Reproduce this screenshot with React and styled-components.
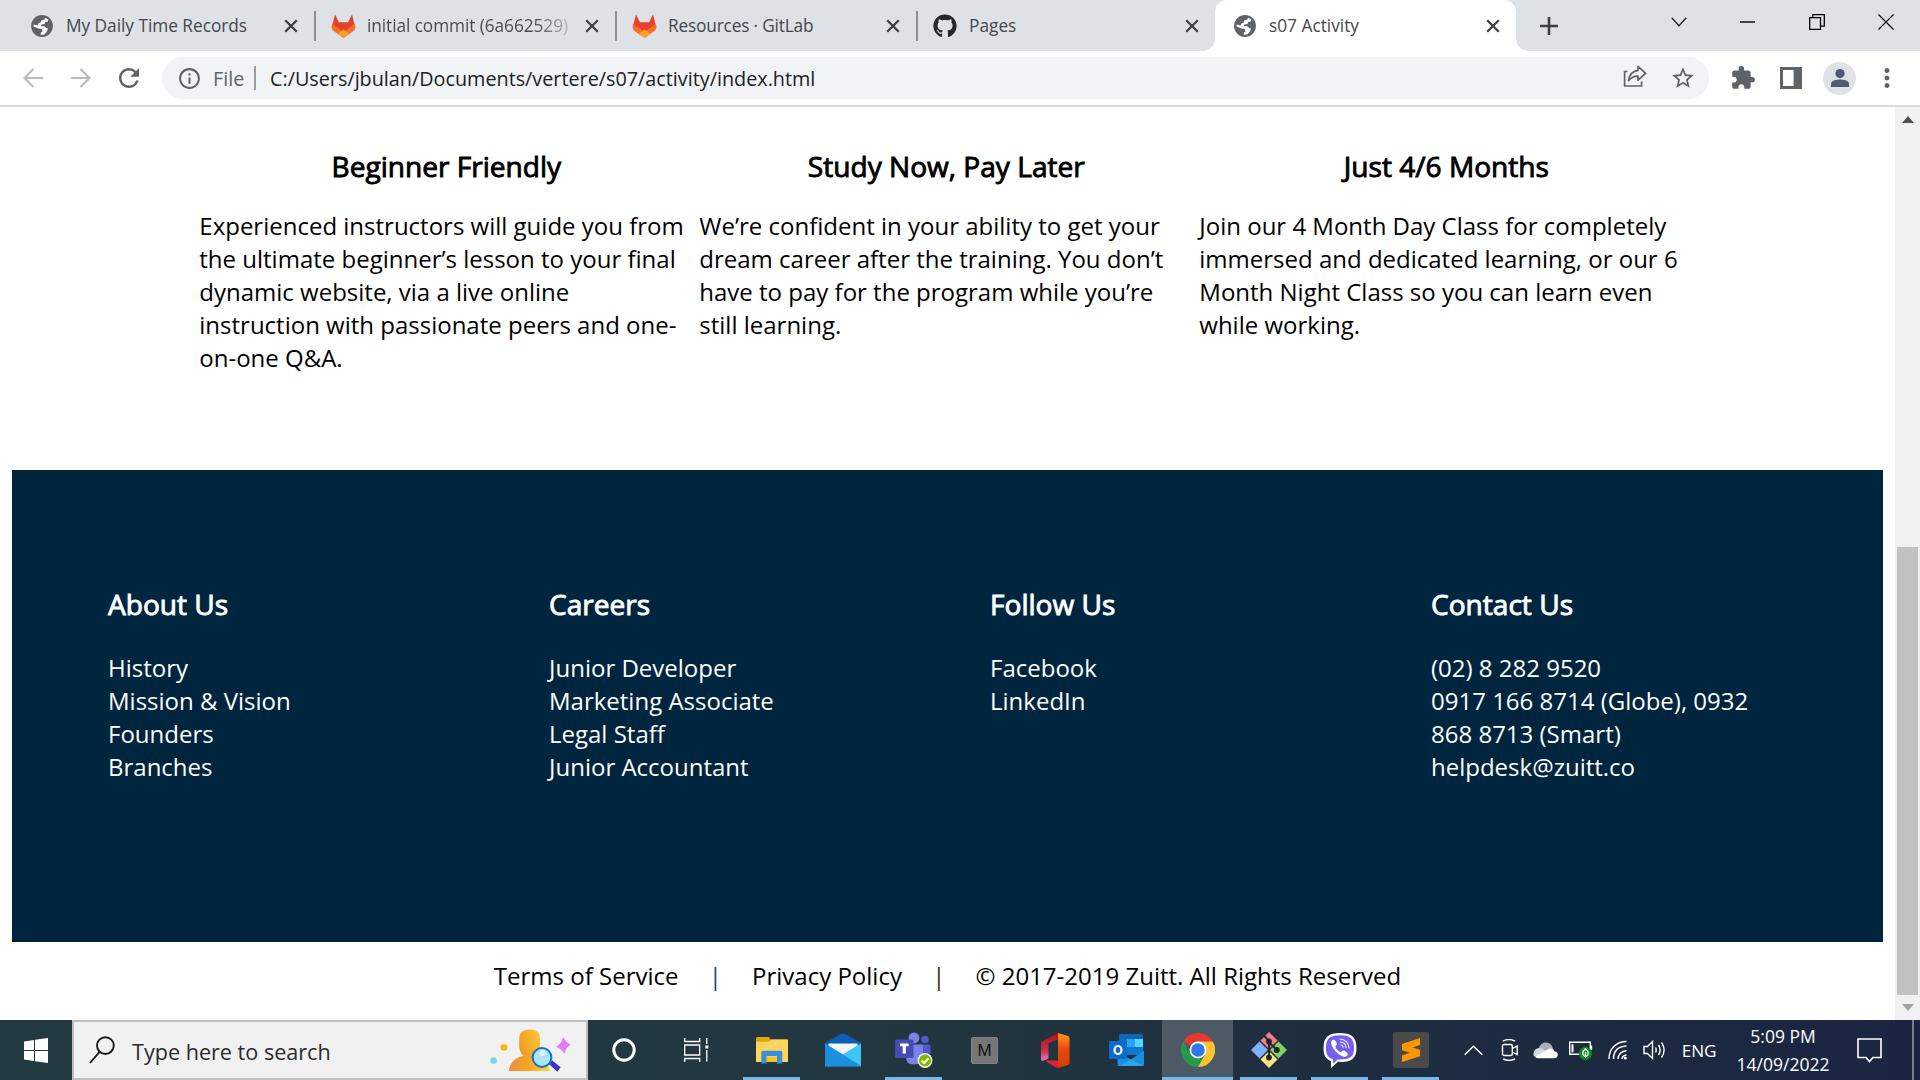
import React from "react";
import styled, { createGlobalStyle, css } from "styled-components";
import { MdRefresh, MdInfoOutline, MdStarBorder, MdExtension, MdMoreVert } from "react-icons/md";
import { FaGithub } from "react-icons/fa";

const GlobalStyle = createGlobalStyle`
  * { box-sizing: border-box; }
  html, body { margin: 0; padding: 0; overflow: hidden; background: #fff; }
  body { font-family: "Open Sans", "Noto Sans", sans-serif; }
  svg { display: block; flex: none; }
`;

const Desktop = styled.div`
  width: 1920px;
  height: 1080px;
  display: flex;
  flex-direction: column;
  overflow: hidden;
`;

/* ---------- browser tabs ---------- */

const TabStrip = styled.header`
  height: 51px;
  flex: none;
  display: flex;
  background: #dee1e6;
  padding-left: 13px;
`;

const Tab = styled.div`
  width: ${(p) => (p.$last ? 299 : 301)}px;
  height: 51px;
  display: flex;
  align-items: center;
  padding: 0 16px 0 ${(p) => (p.$active ? 17 : 16)}px;
  position: relative;
  ${(p) =>
    p.$active &&
    css`
      background: #fff;
      border-radius: 12px 12px 0 0;
      &::before,
      &::after {
        content: "";
        position: absolute;
        bottom: 0;
        width: 12px;
        height: 12px;
      }
      &::before {
        left: -12px;
        background: radial-gradient(circle at 0 0, transparent 11.5px, #fff 12px);
      }
      &::after {
        right: -12px;
        background: radial-gradient(circle at 100% 0, transparent 11.5px, #fff 12px);
      }
    `}
  ${(p) =>
    p.$divider &&
    css`
      &::after {
        content: "";
        position: absolute;
        right: -2px;
        top: 11px;
        width: 2px;
        height: 30px;
        background: #8d9094;
      }
    `}
`;

const Favicon = styled.span`
  width: 26px;
  display: flex;
  justify-content: center;
  flex: none;
  margin-right: 11px;
  color: ${(p) => p.$color || "#5f6368"};
`;

const TabTitle = styled.span`
  width: 203px;
  flex: none;
  font-size: 17.3px;
  line-height: 24px;
  letter-spacing: ${(p) => p.$tracking || 0}px;
  color: #45484c;
  white-space: nowrap;
  ${(p) =>
    p.$fade &&
    css`
      background: linear-gradient(90deg, #45484c 168px, #b9bcc0 203px);
      -webkit-background-clip: text;
      color: transparent;
    `}
`;

const CloseSlot = styled.span`
  margin-left: auto;
`;

const NewTab = styled.div`
  width: 66px;
  display: flex;
  align-items: center;
  justify-content: center;
`;

const WindowControls = styled.div`
  margin-left: auto;
  display: flex;
  height: 43px;
  align-items: center;
`;

const WindowButton = styled.span`
  width: 69px;
  display: flex;
  justify-content: center;
`;

/* ---------- toolbar ---------- */

const Toolbar = styled.div`
  height: 56px;
  flex: none;
  display: flex;
  align-items: center;
  background: #fff;
  border-bottom: 2px solid #d9dadc;
  padding: 0 16px 0 9px;
`;

const ToolButton = styled.span`
  width: ${(p) => p.$w || 48}px;
  flex: none;
  display: flex;
  justify-content: center;
  color: #5f6368;
`;

const Omnibox = styled.div`
  flex: none;
  width: 1547px;
  height: 42px;
  margin-left: 9px;
  margin-right: 10px;
  border-radius: 21px;
  background: #f1f3f4;
  display: flex;
  align-items: center;
  padding-left: 15px;
  padding-right: 2px;
  color: #5f6368;
  font-size: 19.8px;
`;

const Scheme = styled.span`
  margin-left: 11px;
  width: 41px;
`;

const Rule = styled.span`
  width: 2px;
  height: 24px;
  background: #9a9da1;
  margin-right: 14px;
`;

const Url = styled.span`
  color: #202124;
`;

const OmniActions = styled.span`
  margin-left: auto;
  display: flex;
`;

const Avatar = styled.span`
  width: 33px;
  height: 33px;
  border-radius: 50%;
  background: #dee1e6;
  display: flex;
  align-items: center;
  justify-content: center;
`;

/* ---------- page ---------- */

const Viewport = styled.div`
  height: 913px;
  flex: none;
  display: flex;
  background: #fff;
`;

const Page = styled.main`
  width: 1895px;
  height: 913px;
  padding: 40px 12px 0;
  display: flex;
  flex-direction: column;
  font-size: 24px;
  line-height: 33px;
  color: #000;
`;

const Features = styled.section`
  height: 323px;
  flex: none;
  display: grid;
  grid-template-columns: repeat(3, 494px);
  column-gap: 6px;
  padding-left: 187.3px;
`;

const Heading = styled.h3`
  margin: 0 0 ${(p) => p.$gap}px;
  font-size: 28.08px;
  line-height: 38px;
  font-weight: 400;
  -webkit-text-stroke: 0.9px currentColor;
  text-align: ${(p) => (p.$center ? "center" : "left")};
`;

const Copy = styled.p`
  margin: 0;
`;

const Footer = styled.footer`
  width: 1871px;
  height: 472px;
  flex: none;
  background: #00253f;
  color: #fff;
  display: grid;
  grid-template-columns: repeat(4, 345px);
  column-gap: 96px;
  padding: 115px 0 0 96px;
`;

const Links = styled.ul`
  list-style: none;
  margin: 0;
  padding: 0;
`;

const Legal = styled.div`
  display: flex;
  justify-content: center;
  margin-top: 17px;
  white-space: pre;
`;

const LegalItem = styled.span`
  padding: 0 ${(p) => (p.$bar ? 30.2 : 0)}px;
  color: ${(p) => p.$tint || "#000"};
`;

const Scrollbar = styled.div`
  width: 25px;
  background: #f1f1f1;
  display: flex;
  flex-direction: column;
  align-items: center;
`;

const ScrollArrow = styled.div`
  height: 25px;
  width: 25px;
  display: flex;
  align-items: center;
  justify-content: center;
`;

const Thumb = styled.div`
  width: 21px;
  height: 449px;
  margin-top: 415px;
  background: #c1c1c1;
`;

/* ---------- taskbar ---------- */

const Taskbar = styled.div`
  height: 60px;
  flex: none;
  display: flex;
  color: #fff;
  background: linear-gradient(90deg, #22393f 0%, #22373f 45%, #20303f 62%, #1c2b40 80%, #1a2542 100%);
`;

const Start = styled.div`
  width: 72px;
  flex: none;
  display: flex;
  align-items: center;
  justify-content: center;
`;

const Search = styled.div`
  width: 516px;
  flex: none;
  height: 60px;
  border: 2px solid #c0c0c0;
  background: #f1f1f1;
  color: #2b2b2b;
  display: flex;
  align-items: center;
  padding: 0 16px 0 15px;
  font-size: 21.6px;
`;

const SearchText = styled.span`
  margin-left: 17px;
  padding-top: 2px;
  flex: 1;
`;

const Apps = styled.div`
  display: flex;
  flex: none;
`;

const AppButton = styled.div`
  width: ${(p) => p.$w || 71}px;
  flex: none;
  height: 60px;
  display: flex;
  align-items: center;
  justify-content: center;
  position: relative;
  margin-right: ${(p) => p.$gap || 0}px;
  background: ${(p) => (p.$active ? "#4d5964" : "transparent")};
  ${(p) =>
    p.$open &&
    css`
      &::after {
        content: "";
        position: absolute;
        bottom: 0;
        left: ${p.$active ? 0 : 7}px;
        right: ${p.$active ? 0 : 7}px;
        height: 3px;
        background: #76b9ed;
      }
    `}
`;

const MTile = styled.span`
  width: 27px;
  height: 27px;
  border-radius: 2px;
  background: #767676;
  border: 1px solid #838383;
  color: #111;
  font: 17px/25px "Liberation Sans", Arial, sans-serif;
  text-align: center;
`;

const Tray = styled.div`
  margin-left: auto;
  flex: none;
  display: flex;
  align-items: center;
  padding-right: 6px;
`;

const TrayItem = styled.span`
  width: ${(p) => p.$w}px;
  flex: none;
  display: flex;
  justify-content: center;
  align-items: center;
`;

const Lang = styled.span`
  width: 56px;
  text-align: center;
  font-size: 17.2px;
  letter-spacing: -0.2px;
`;

const Clock = styled.span`
  width: 112px;
  text-align: center;
  font-size: 17.5px;
  line-height: 28px;
`;

const ShowDesktop = styled.span`
  width: 2px;
  height: 60px;
  margin-left: 13px;
  background: #76808d;
`;

/* ---------- drawings ---------- */

const Globe = () => (
  <svg width="22" height="22" viewBox="0 0 22 22">
    <circle cx="11" cy="11" r="10.900" fill="#5f6368" />
    <path
      d="M14.200 2.700 17.400 4.600 16.800 6.600 14 7.200 13.600 9 10.400 9.400 9.800 11.200H13.200L15.200 13 17 13.400 16 16.600 13.200 19.600 9.400 19.800 10 17.600 11.600 16.400 10.600 14 6.600 13.200 2.300 11.200 2.800 9.400 6.400 10.400 7.600 8.200 9.800 7.400 10.200 5.400 13.200 4.800Z"
      fill="#fff"
    />
  </svg>
);

const Cross = () => (
  <svg width="14" height="14" viewBox="0 0 14 14">
    <path d="M1.2 1.2 12.8 12.8M12.8 1.2 1.2 12.8" stroke="#3c4043" strokeWidth="2.3" />
  </svg>
);

const GitLab = () => (
  <svg width="26" height="26" viewBox="0 0 26 26">
    <path d="M2 13.500 5 1.200 9 9.600h9l4-8.400L25 13.500 13.500 25Z" fill="#e2432a" />
    <path d="M2 10.500 1.500 14.500Q2 17 4 18.200L13.500 25 23 18.200Q25 17 25.500 14.500L25 10.500 13.500 19Z" fill="#fc6d26" />
    <path d="M4 9.600h19L13.500 18.200Z" fill="#e2432a" />
    <path d="M8 20.800 13.500 16.600l5.500 4.200L13.500 25Z" fill="#fca326" />
  </svg>
);

const Arrow = ({ flip }) => (
  <svg width="20" height="20" viewBox="0 0 20 20" fill="none" stroke="#bababc" strokeWidth="2.2">
    <path d={flip ? "M0 10H18M9.6 1 18.5 10 9.6 19" : "M20 10H2M10.4 1 1.5 10 10.4 19"} />
  </svg>
);

const Share = () => (
  <svg width="24" height="22" viewBox="0 0 24 22" fill="none" stroke="#5f6368" strokeWidth="1.7">
    <path d="M4.500 6.500H1.600V21H18.600V16.500" />
    <path d="M15 1.400 22.700 8.400 15 15.200V11.200C10.500 11.200 8 12.600 5.600 15.600 6.200 10 9.500 6.200 15 5.400Z" strokeLinejoin="round" />
  </svg>
);

const SidePanel = () => (
  <svg width="22" height="22" viewBox="0 0 22 22">
    <path d="M0 0H22V22H0ZM3 3V19H13.6V3Z" fill="#5f6368" fillRule="evenodd" />
  </svg>
);

const Person = () => (
  <svg width="20" height="20" viewBox="0 0 20 20" fill="#4e5a6e">
    <circle cx="10" cy="5.6" r="4.6" />
    <path d="M1 19v-3.2C1 12.700 6 11.600 10 11.600s9 1.100 9 4.200V19Z" />
  </svg>
);

const Windows = () => (
  <svg width="24" height="25" viewBox="0 0 24 25" fill="#fff">
    <path d="M0 3.400 10 2v10H0ZM11 1.850 24 0v12H11ZM0 13h10v10L0 21.600ZM11 13h13v12l-13-1.850Z" />
  </svg>
);

const Magnifier = () => (
  <svg width="26" height="28" viewBox="0 0 26 28" fill="none" stroke="#1a1a1a" strokeWidth="1.9">
    <circle cx="16.400" cy="9.600" r="8.400" />
    <path d="M10.600 15.800 1 27" />
  </svg>
);

const SearchArt = () => (
  <svg width="84" height="52" viewBox="0 0 84 52">
    <defs>
      <linearGradient id="body" x1="0" x2="1" y1="0" y2="0">
        <stop offset="0" stopColor="#e98c44" />
        <stop offset="0.450" stopColor="#f5a623" />
        <stop offset="1" stopColor="#ffd43b" />
      </linearGradient>
      <linearGradient id="neck" x1="0" x2="1" y1="0.600" y2="0">
        <stop offset="0" stopColor="#f09a1f" />
        <stop offset="1" stopColor="#ffc83a" />
      </linearGradient>
    </defs>
    <circle cx="18" cy="23.500" r="3.300" fill="#ffb300" />
    <circle cx="7.500" cy="36.500" r="3.300" fill="#6fd9ea" />
    <path d="M23 47c1-9 7-15.500 19-15.500S63 38 64 47Z" fill="url(#body)" />
    <path d="M33.200 15c0-6.500 4-9.600 10.500-9.600S54 8.500 54 15v6c0 7-3 12.600-10.400 12.600S33.200 28 33.200 21Z" fill="url(#neck)" />
    <path d="m63 40 3-3.800 8.700 7-3.500 4.600Z" fill="#3d35c9" />
    <circle cx="56" cy="33.500" r="9.400" fill="#ace4f7" stroke="#1170cf" strokeWidth="2" />
    <circle cx="56.500" cy="29" r="3" fill="#e3f8ff" />
    <path d="M77.300 14.500q1.600 4 6.700 6.600-4.600 1-5.700 7.200-2.600-4.600-7-5.600 4.700-2.200 6-8.200Z" fill="#e57bf5" stroke="#e57bf5" strokeWidth="1.500" strokeLinejoin="round" />
  </svg>
);

const TaskView = () => (
  <svg width="25" height="24" viewBox="0 0 25 24" fill="none" stroke="#fff" strokeWidth="1.300">
    <path d="M.7 0V3.500H15.700V0M.7 24V20.500H15.700V24M.7 7H15.700V17H.7ZM22.800 0V6M22.800 12V23.500" />
    <path d="M21.300 7.500h3v3h-3Z" fill="#fff" stroke="none" />
  </svg>
);

const Explorer = () => (
  <svg width="32" height="27" viewBox="0 0 32 27">
    <path d="M0 1.500Q0 0 1.500 0H13l1.500 2.500H30.500Q32 2.500 32 4V24.500H0Z" fill="#e3a20b" />
    <path d="M0 4.700H13L15.500 2.500H32V25H0Z" fill="#ffd45e" />
    <path d="M5.300 26.600V15.500Q5.300 13.800 7 13.800H24.600Q26.300 13.800 26.300 15.500V26.600H21V19H10.600V26.600Z" fill="#3a8fd9" />
    <path d="M10.800 20H20.800V25H10.800Z" fill="#fbc02d" />
  </svg>
);

const Mail = () => (
  <svg width="36" height="34" viewBox="0 0 36 34">
    <path d="M0 10 16.200.8Q18 0 19.800.8L36 10V20H0Z" fill="#0a5fb4" />
    <path d="M3.500 10.500H32.500V22H3.500Z" fill="#f3f5f8" />
    <path d="M0 10.500 18 21.500 36 10.500V33.500H0Z" fill="#28a9ea" />
    <path d="M18 21.500 36 10.500V33.500Z" fill="#3cc7f4" />
    <path d="M0 10.500 36 33H1.200Q0 33 0 32Z" fill="#1d8fe0" />
  </svg>
);

const Teams = () => (
  <svg width="38" height="36" viewBox="0 0 38 36">
    <circle cx="30" cy="7.500" r="3.800" fill="#5059c9" />
    <path d="M24 12.500H34Q35.500 12.500 35.500 14V21q0 6-7 6Z" fill="#5059c9" />
    <circle cx="19" cy="6" r="5.400" fill="#7b83eb" />
    <path d="M11 12.500H26.500Q28 12.500 28 14V23q0 9-8.500 9.500T11 25Z" fill="#7b83eb" />
    <rect x="0" y="7.500" width="18.500" height="18.500" rx="1.500" fill="#454db5" />
    <path d="M5 11.500H13.600V14.200H10.900V21.500H7.700V14.200H5Z" fill="#fff" />
    <circle cx="30" cy="28.500" r="7.400" fill="#fff" />
    <circle cx="30" cy="28.500" r="6.100" fill="#7fba00" />
    <path d="m26.600 28.600 2.500 2.500 4.400-4.700" stroke="#fff" strokeWidth="2.100" fill="none" />
  </svg>
);

const Office = () => (
  <svg width="29" height="35" viewBox="0 0 29 35">
    <defs>
      <linearGradient id="offl" x1="0" x2="0" y1="0" y2="1">
        <stop offset="0" stopColor="#b01116" />
        <stop offset="0.650" stopColor="#c8354e" />
        <stop offset="1" stopColor="#e879c8" />
      </linearGradient>
      <linearGradient id="offr" x1="0" x2="0" y1="0" y2="1">
        <stop offset="0" stopColor="#ff9a1a" />
        <stop offset="0.450" stopColor="#e84a0c" />
        <stop offset="1" stopColor="#d83b01" />
      </linearGradient>
    </defs>
    <path d="M0 9 17 0V6.500L7.500 10V25.500L1.500 28Q0 28 0 26Z" fill="url(#offl)" />
    <path d="M5.500 27.500H17V35L15 34.500 5.500 29Z" fill="#e0203a" />
    <path d="M17 0 27 3Q28.500 3.600 28.500 5V30Q28.500 31.600 27 32L17 35Z" fill="url(#offr)" />
  </svg>
);

const Outlook = () => (
  <svg width="36" height="33" viewBox="0 0 36 33">
    <path d="M10 1.500Q10 0 11.500 0H32.500Q34 0 34 1.500V21H10Z" fill="#1066b5" />
    <path d="M10 5H18V13H10Z" fill="#1470c4" />
    <path d="M18 5H26V13H18Z" fill="#28a8ea" />
    <path d="M26 5H34V13H26Z" fill="#50d9ff" />
    <path d="M18 13H34V21H18Z" fill="#0f78d4" />
    <path d="M35 16.500V30.500Q35 32 33.500 32H10Q8.500 32 8.500 30.500V18L22 25.500Z" fill="#1a8fe0" />
    <path d="M22 25.500 35 32H10Z" fill="#2ba6ee" />
    <rect x="0" y="7" width="18" height="18" rx="1.400" fill="#0c6cc8" />
    <ellipse cx="9" cy="16" rx="3.500" ry="4" stroke="#fff" strokeWidth="2.200" fill="none" />
  </svg>
);

const Chrome = () => (
  <svg width="34" height="34" viewBox="0 0 48 48">
    <path d="M24 24 3.200 12A24 24 0 0 1 44.800 12Z" fill="#e33b2e" />
    <path d="M24 24V12H44.800A24 24 0 0 1 24 48Z" fill="#fdc52c" />
    <path d="M3.200 12A24 24 0 0 0 24 48L34.400 30 24 24 13.600 30Z" fill="#259a4b" />
    <circle cx="24" cy="24" r="12" fill="#fff" />
    <circle cx="24" cy="24" r="9.600" fill="#2f78ec" />
  </svg>
);

const Git = () => (
  <svg width="36" height="36" viewBox="0 0 36 36">
    <path d="M18 0 26.500 8.500 18 17 9.500 8.500Z" fill="#f77d7f" />
    <path d="M8.500 9.500 17 18 8.500 26.500 0 18Z" fill="#7fb0fb" />
    <path d="M27.500 9.500 36 18 27.500 26.500 19 18Z" fill="#84cf60" />
    <path d="M18 19 26.500 27.500 18 36 9.500 27.500Z" fill="#ffe27a" />
    <path d="M13 3.500 18 9V26M18 10.500 26 18" stroke="#1c2a38" strokeWidth="2" fill="none" />
    <circle cx="18" cy="9.500" r="2.900" fill="#1a2530" />
    <circle cx="18" cy="25.500" r="2.900" fill="#1a2530" />
    <circle cx="25.800" cy="18" r="2.900" fill="#1a2530" />
  </svg>
);

const Viber = () => (
  <svg width="36" height="37" viewBox="0 0 36 37">
    <path d="M18 1C7 1 1.500 4.500 1.500 16c0 7 2 11 7.500 13V36l7-6.200c13 .7 18.500-2.800 18.500-13.800C34.500 4.500 29 1 18 1Z" fill="#fff" />
    <path d="M18 3.300C8.500 3.300 4 6 4 16c0 6 1.700 9.800 7 11.200v4.600l4.500-4.400C27.500 28 32 25.500 32 16 32 6 27.500 3.300 18 3.300Z" fill="#7360f2" />
    <path d="M11.500 7.500c-1.800.8-3 2.200-2.300 4.200 2 6 6.500 10.800 12.300 13 2 .7 3.600-.7 4.300-2.500.3-1-2.500-3-3.900-3.600-1.500-.5-2 1.600-3.200 1.500-2.600-.8-4.600-2.900-5.400-5.500.1-1.300 2-1.400 1.600-3-.5-1.400-2.200-4-3.400-4.100Z" fill="#fff" />
    <path d="M17.500 7c5.500 0 9.500 4 9.500 9.500M18 10c3.700.2 6 2.500 6 6M18.500 13c1.600.1 2.500 1 2.600 2.500" stroke="#e9e5ff" strokeWidth="1.200" fill="none" />
  </svg>
);

const Sublime = () => (
  <svg width="36" height="36" viewBox="0 0 36 36">
    <rect width="36" height="36" rx="2" fill="#4a4a4a" />
    <path d="M9 12 27 6V13L19.500 15.500 27 17.700V24.300L9 30V23.500L17 20.800 9 18.300Z" fill="#ff9800" />
  </svg>
);

const line = { fill: "none", stroke: "#fff", strokeWidth: 1.4 };

const Chevron = () => (
  <svg width="19" height="11" viewBox="0 0 19 11" {...line}>
    <path d="m.7 9.800 8.800-8.600 8.800 8.600" />
  </svg>
);

const MeetNow = () => (
  <svg width="18" height="24" viewBox="0 0 18 24" {...line}>
    <rect x="1.500" y="6.500" width="9.800" height="11" rx="1.500" />
    <path d="m11.500 10.500 4.700-2.500v8.500l-4.700-2.500M2 3Q8 .2 14 3M2 21Q8 23.800 14 21" />
  </svg>
);

const Cloud = () => (
  <svg width="25" height="17" viewBox="0 0 25 17">
    <path d="M5.500 8C6 3 9 .5 13 .5c3.500 0 6 2 7 6l-8 5Z" fill="#a9afb8" />
    <path d="M1 14.500C-.7 10.500 2 6 6.500 6c2.500 0 4.500 1.500 8 4l-6 4Z" fill="#d5d8dc" />
    <path d="M2 15c3-3 8-4 12-7 3-2.500 7-1.500 7.500 1.600 2.500 0 3.500 2 3.300 3.400-.2 2-1.600 3.300-3.800 3.300H5.500Q3.200 16.300 2 15Z" fill="#fff" />
  </svg>
);

const Battery = () => (
  <svg width="24" height="20" viewBox="0 0 24 20">
    <path d="M.7 2.200H21.300V14.300H.7ZM22.500 5.500V10" {...line} />
    <rect x="2.500" y="4.300" width="2" height="8" fill="#fff" />
    <circle cx="16.500" cy="13.300" r="6.600" fill="#0b8a1a" />
    <path d="M16.500 8.800c-3.500 3-3.500 5.500-1 7.500h2c2.500-2 2.500-4.500-1-7.500ZM16.500 12.100v6" fill="none" stroke="#fff" strokeWidth="1.300" />
  </svg>
);

const Wifi = () => (
  <svg width="20" height="20" viewBox="0 0 20 20" {...line}>
    <path d="M1 19C1 9 8 1.500 18.500 1.500M5.500 19C5.500 11 10.500 6.500 18.500 6M10 19c0-4.500 3.500-8 8.500-8.300" />
    <path d="M14 19c.2-2 2-3.700 4.500-4" />
    <circle cx="17.300" cy="18" r="1.500" fill="#fff" stroke="none" />
  </svg>
);

const Speaker = () => (
  <svg width="23" height="20" viewBox="0 0 23 20" {...line}>
    <path d="M1 6.500H4.500L9.500 1.500V18.500L4.500 13.500H1Z" />
    <path d="M12.500 7.500q1.500 2.500 0 5M15.500 5q3.300 5 0 10M18.500 2.500q5.200 7.500 0 15" />
  </svg>
);

const Notice = () => (
  <svg width="25" height="26" viewBox="0 0 25 26" {...line} strokeWidth="1.600">
    <path d="M1 2H24V20.500H16L12.500 24.500 9 20.500H1Z" />
  </svg>
);

/* ---------- data ---------- */

const tabs = [
  { title: "My Daily Time Records", icon: <Globe />, divider: true, tracking: -0.03 },
  { title: "initial commit (6a662529)", icon: <GitLab />, divider: true, fade: true, tracking: -0.08 },
  { title: "Resources · GitLab", icon: <GitLab />, divider: true, tracking: -0.18 },
  { title: "Pages", icon: <FaGithub size={24} />, color: "#24292f", last: true },
  { title: "s07 Activity", icon: <Globe />, active: true },
];

const features = [
  ["Beginner Friendly", "Experienced instructors will guide you from the ultimate beginner’s lesson to your final dynamic website, via a live online instruction with passionate peers and one-on-one Q&A."],
  ["Study Now, Pay Later", "We’re confident in your ability to get your dream career after the training. You don’t have to pay for the program while you’re still learning."],
  ["Just 4/6 Months", "Join our 4 Month Day Class for completely immersed and dedicated learning, or our 6 Month Night Class so you can learn even while working."],
];

const footer = [
  ["About Us", ["History", "Mission & Vision", "Founders", "Branches"]],
  ["Careers", ["Junior Developer", "Marketing Associate", "Legal Staff", "Junior Accountant"]],
  ["Follow Us", ["Facebook", "LinkedIn"]],
  ["Contact Us", ["(02) 8 282 9520", "0917 166 8714 (Globe), 0932 868 8713 (Smart)", "helpdesk@zuitt.co"]],
];

const apps = [
  { icon: <Explorer />, open: true },
  { icon: <Mail /> },
  { icon: <Teams />, open: true },
  { icon: <MTile>M</MTile> },
  { icon: <Office /> },
  { icon: <Outlook /> },
  { icon: <Chrome />, open: true, active: true },
  { icon: <Git />, open: true },
  { icon: <Viber />, open: true },
  { icon: <Sublime />, open: true },
];

export default function App() {
  return (
    <Desktop>
      <GlobalStyle />
      <TabStrip>
        {tabs.map((t) => (
          <Tab key={t.title} $active={t.active} $divider={t.divider} $last={t.last}>
            <Favicon $color={t.color}>{t.icon}</Favicon>
            <TabTitle $fade={t.fade} $tracking={t.tracking}>{t.title}</TabTitle>
            <CloseSlot><Cross /></CloseSlot>
          </Tab>
        ))}
        <NewTab>
          <svg width="18" height="18" viewBox="0 0 18 18">
            <path d="M9 0V18M0 9H18" stroke="#3c4043" strokeWidth="2.600" />
          </svg>
        </NewTab>
        <WindowControls>
          <WindowButton>
            <svg width="16" height="10" viewBox="0 0 16 10"><path d="m.7.700 7.300 8 7.300-8" stroke="#222" strokeWidth="1.300" fill="none" /></svg>
          </WindowButton>
          <WindowButton>
            <svg width="16" height="2" viewBox="0 0 16 2"><path d="M0 1H15" stroke="#000" strokeWidth="1.400" /></svg>
          </WindowButton>
          <WindowButton>
            <svg width="16" height="16" viewBox="0 0 16 16"><path d="M.7 3.700H11.500V15.300H.7ZM3.800 3.700V.7H15.300V12.200H11.500" stroke="#000" strokeWidth="1.300" fill="none" /></svg>
          </WindowButton>
          <WindowButton>
            <svg width="16" height="16" viewBox="0 0 16 16"><path d="M.5.500l15 15M15.500.500l-15 15" stroke="#000" strokeWidth="1.200" fill="none" /></svg>
          </WindowButton>
        </WindowControls>
      </TabStrip>

      <Toolbar>
        <ToolButton><Arrow /></ToolButton>
        <ToolButton><Arrow flip /></ToolButton>
        <ToolButton><MdRefresh size={30} /></ToolButton>
        <Omnibox>
          <MdInfoOutline size={25} />
          <Scheme>File</Scheme>
          <Rule />
          <Url>C:/Users/jbulan/Documents/vertere/s07/activity/index.html</Url>
          <OmniActions>
            <ToolButton><Share /></ToolButton>
            <ToolButton><MdStarBorder size={26} /></ToolButton>
          </OmniActions>
        </Omnibox>
        <ToolButton><MdExtension size={26} /></ToolButton>
        <ToolButton><SidePanel /></ToolButton>
        <ToolButton $w={49}><Avatar><Person /></Avatar></ToolButton>
        <ToolButton $w={46}><MdMoreVert size={30} /></ToolButton>
      </Toolbar>

      <Viewport>
        <Page>
          <Features>
            {features.map(([title, text]) => (
              <article key={title}>
                <Heading $center $gap={24}>{title}</Heading>
                <Copy>{text}</Copy>
              </article>
            ))}
          </Features>
          <Footer>
            {footer.map(([title, links]) => (
              <nav key={title}>
                <Heading $gap={28}>{title}</Heading>
                <Links>{links.map((l) => <li key={l}>{l}</li>)}</Links>
              </nav>
            ))}
          </Footer>
          <Legal>
            <LegalItem>Terms of Service</LegalItem>
            <LegalItem $bar $tint="#0b4f86">|</LegalItem>
            <LegalItem>Privacy Policy</LegalItem>
            <LegalItem $bar $tint="#4a2a10">|</LegalItem>
            <LegalItem>© 2017-2019 Zuitt. All Rights Reserved</LegalItem>
          </Legal>
        </Page>
        <Scrollbar>
          <ScrollArrow>
            <svg width="12" height="7" viewBox="0 0 12 7"><path d="M6 0 12 7H0Z" fill="#505050" /></svg>
          </ScrollArrow>
          <Thumb />
          <ScrollArrow>
            <svg width="12" height="7" viewBox="0 0 12 7"><path d="M0 0H12L6 7Z" fill="#a3a3a3" /></svg>
          </ScrollArrow>
        </Scrollbar>
      </Viewport>

      <Taskbar>
        <Start><Windows /></Start>
        <Search>
          <Magnifier />
          <SearchText>Type here to search</SearchText>
          <SearchArt />
        </Search>
        <Apps>
          <AppButton $w={72}>
            <svg width="24" height="24" viewBox="0 0 24 24"><circle cx="12" cy="12" r="10.200" fill="none" stroke="#fff" strokeWidth="3" /></svg>
          </AppButton>
          <AppButton $w={72} $gap={4}><TaskView /></AppButton>
          {apps.map((a, i) => (
            <AppButton key={i} $open={a.open} $active={a.active}>{a.icon}</AppButton>
          ))}
        </Apps>
        <Tray>
          <TrayItem $w={36}><Chevron /></TrayItem>
          <TrayItem $w={37}><MeetNow /></TrayItem>
          <TrayItem $w={35}><Cloud /></TrayItem>
          <TrayItem $w={36}><Battery /></TrayItem>
          <TrayItem $w={38}><Wifi /></TrayItem>
          <TrayItem $w={34}><Speaker /></TrayItem>
          <Lang>ENG</Lang>
          <Clock>5:09 PM<br />14/09/2022</Clock>
          <TrayItem $w={60}><Notice /></TrayItem>
          <ShowDesktop />
        </Tray>
      </Taskbar>
    </Desktop>
  );
}
